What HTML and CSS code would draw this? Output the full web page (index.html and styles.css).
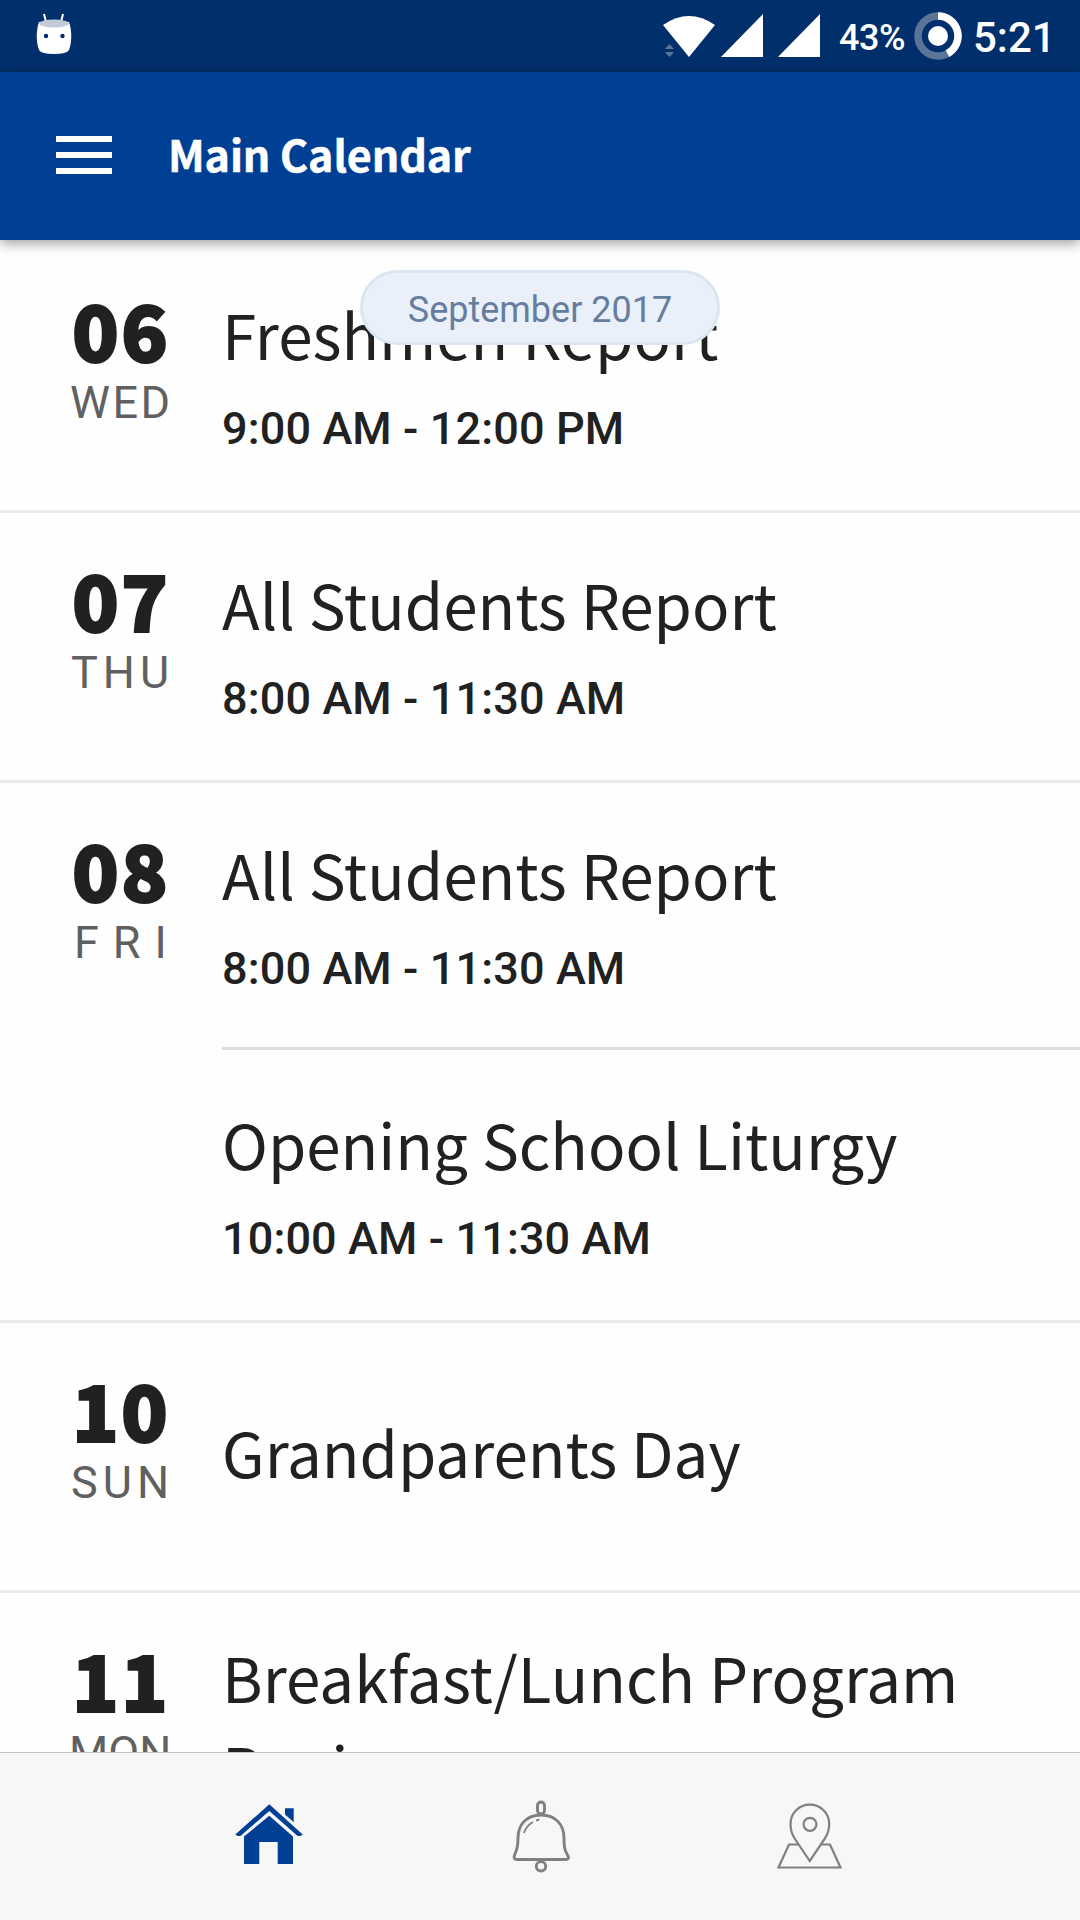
FILE: index.html
```
<!DOCTYPE html>
<html lang="en">
<head>
    <meta charset="UTF-8">
    <meta name="viewport" content="width=device-width, initial-scale=1.0">
    <title>Main Calendar</title>
    <link rel="stylesheet" href="styles.css">
</head>
<body>

    <!-- Status bar -->
    <div class="status-bar">
        <svg class="robot-icon" width="36" height="44" viewBox="0 0 36 44">
            <path d="M8 2l2 8M27 2l-2 8" stroke="#fff" stroke-width="2"/>
            <path d="M3 10C0 18 0 30 3 38Q5 42 18 42T33 38C36 30 36 18 33 10z" fill="#fff"/>
            <ellipse cx="18" cy="11.500" rx="15" ry="4" fill="#c3cbd8"/>
            <circle cx="10" cy="24" r="2.200" fill="#002f6c"/>
            <circle cx="26.500" cy="24" r="2.200" fill="#002f6c"/>
        </svg>
        <svg class="signal-icons" width="160" height="48" viewBox="0 0 160 48">
            <path d="M1 13Q27-5 53 13L27 45z" fill="#fff"/>
            <path d="M3 37l4.500-5 4.500 5zM3 40l4.500 5 4.500-5z" fill="#5b7599"/>
            <path d="M101 2v43H59zM158 2v43h-42z" fill="#fff"/>
        </svg>
        <span class="battery-text">43%</span>
        <svg class="battery-icon" width="48" height="48" viewBox="0 0 48 48">
            <circle cx="24" cy="24" r="20" fill="none" stroke="#5b7599" stroke-width="7.500"/>
            <path d="M24 4a20 20 0 0 1 9.500 37.600" fill="none" stroke="#fff" stroke-width="7.500"/>
            <circle cx="24" cy="24" r="10" fill="#fff"/>
        </svg>
        <span class="clock">5:21</span>
    </div>

    <!-- App header -->
    <header class="header">
        <div class="menu">
            <span></span>
            <span></span>
            <span></span>
        </div>
        <h1>Main Calendar</h1>
    </header>

    <!-- Event list -->
    <main class="calendar">
        <div class="month">September 2017</div>

        <section class="day">
            <div class="date">
                <div class="number">06</div>
                <div class="weekday wed">WED</div>
            </div>
            <div class="events">
                <div class="event">
                    <h2>Freshmen Report</h2>
                    <p>9:00 AM - 12:00 PM</p>
                </div>
            </div>
        </section>

        <section class="day">
            <div class="date">
                <div class="number">07</div>
                <div class="weekday thu">THU</div>
            </div>
            <div class="events">
                <div class="event">
                    <h2>All Students Report</h2>
                    <p>8:00 AM - 11:30 AM</p>
                </div>
            </div>
        </section>

        <section class="day">
            <div class="date">
                <div class="number">08</div>
                <div class="weekday fri">FRI</div>
            </div>
            <div class="events">
                <div class="event">
                    <h2>All Students Report</h2>
                    <p>8:00 AM - 11:30 AM</p>
                </div>
                <div class="event">
                    <h2>Opening School Liturgy</h2>
                    <p>10:00 AM - 11:30 AM</p>
                </div>
            </div>
        </section>

        <section class="day">
            <div class="date">
                <div class="number">10</div>
                <div class="weekday sun">SUN</div>
            </div>
            <div class="events">
                <div class="event all-day">
                    <h2>Grandparents Day</h2>
                </div>
            </div>
        </section>

        <section class="day">
            <div class="date">
                <div class="number">11</div>
                <div class="weekday mon">MON</div>
            </div>
            <div class="events">
                <div class="event two-line">
                    <h2>Breakfast/Lunch Program Begins</h2>
                </div>
            </div>
        </section>
    </main>

    <!-- Bottom navigation -->
    <nav class="bottom-nav">
        <a>
            <svg width="100" height="100" viewBox="0 0 100 100" fill="#004094">
                <path d="M65 28.300h8.700V46L65 38z"/>
                <path d="M17 54.500L49.300 27 81 54.500" fill="none" stroke="#f7f7f7" stroke-width="9"/>
                <path d="M49.300 35.700L73 56.500V84H57.700V62H39.300V84H24V56.500z"/>
                <path d="M49.300 24.300L82.700 54.500Q80 57 77 55.500L49.300 31 21 55.500Q18 57 15.300 54.500z"/>
            </svg>
        </a>
        <a>
            <svg width="100" height="100" viewBox="0 0 100 100" fill="none" stroke="#808080" stroke-width="2.900">
                <rect x="47.500" y="22" width="7" height="12" rx="3.500"/>
                <path d="M51 35C36 35 28 45 28 58C28 69 26 72 24.500 75Q23 79.500 27 79.500H76Q80 79.500 77.500 75C75 71 74 68 74 58C74 45 66 35 51 35z"/>
                <path d="M34 53C35 49 38 45 43 42M46 40.500l3.500-.8" stroke-width="1.800"/>
                <circle cx="51" cy="86.300" r="4.700"/>
            </svg>
        </a>
        <a>
            <svg width="100" height="100" viewBox="0 0 100 100" fill="none" stroke="#808080" stroke-width="2.200">
                <path d="M38 64.500H29L18.500 87.500H80.500L70 64.500H61.500"/>
                <path d="M49.700 81L35 59C31.500 54 30.500 49 30.500 44A19.300 19.300 0 0 1 69.200 44C69.200 49 68 54 64.500 59z"/>
                <circle cx="50" cy="44.300" r="6.500"/>
            </svg>
        </a>
    </nav>

</body>
</html>
```
FILE: styles.css
```
* {
    box-sizing: border-box;
}
body {
    font-family: Roboto, sans-serif;
    margin: 0;
    width: 1080px;
    height: 1920px;
    display: flex;
    flex-direction: column;
    overflow: hidden;
    background-color: #fefefe;
    color: #212121;
}
h1, h2, p {
    margin: 0;
}

/* Status bar */
.status-bar {
    flex: none;
    display: flex;
    align-items: flex-start;
    height: 72px;
    padding: 12px 28px 0 36px;
    background-color: #002f6c;
    color: #fff;
}
.robot-icon {
    margin-right: auto;
}
.signal-icons {
    margin-right: 17px;
}
.battery-text {
    width: 75px;
    font-size: 36px;
    font-weight: 500;
    line-height: 52px;
    letter-spacing: -0.5px;
}
.battery-icon {
    margin-right: 11px;
}
.clock {
    width: 79px;
    font-size: 42px;
    font-weight: 500;
    line-height: 52px;
}

/* Header */
.header {
    flex: none;
    display: flex;
    align-items: center;
    height: 168px;
    padding: 0 56px;
    background-color: #004094;
    color: #fff;
    box-shadow: 0 3px 12px rgba(0, 0, 0, 0.4);
    z-index: 2;
}
.menu {
    display: flex;
    flex-direction: column;
    gap: 10px;
    width: 56px;
    margin: -2px 56px 0 0;
}
.menu span {
    height: 6px;
    background-color: #fff;
}
h1 {
    margin-top: -7px;
    font-family: "Noto Sans CJK JP", sans-serif;
    font-size: 43px;
    font-weight: 700;
    line-height: 64px;
    letter-spacing: -0.1px;
    -webkit-text-stroke: 0.5px #fff;
}

/* Calendar */
.calendar {
    flex: 1;
    position: relative;
    padding-top: 3px;
    overflow: hidden;
}
.month {
    position: absolute;
    top: 30px;
    left: 360px;
    width: 360px;
    height: 75px;
    border: 3px solid #dce6f0;
    border-radius: 38px;
    background-color: #e9f0fa;
    color: #667d9d;
    font-size: 36px;
    line-height: 74px;
    text-align: center;
}
.day {
    display: flex;
    min-height: 270px;
    border-bottom: 3px solid #ebebeb;
}
.date {
    width: 222px;
    padding: 46px 0 0 71px;
}
.number {
    font-family: "Noto Sans CJK JP", sans-serif;
    font-size: 77px;
    font-weight: 900;
    line-height: 80px;
    letter-spacing: 2px;
    padding-left: 1px;
    -webkit-text-stroke: 2px #212121;
}
.weekday {
    margin-top: 7px;
    font-size: 45px;
    line-height: 53px;
    color: #606060;
}
.wed { margin-left: -1px; letter-spacing: 2.5px; }
.thu { letter-spacing: 5px; }
.fri { padding-left: 3px; letter-spacing: 14px; }
.sun { letter-spacing: 5px; }
.mon { margin-left: -2px; letter-spacing: 0; }
.events {
    flex: 1;
}
.event {
    height: 267px;
    padding-top: 45px;
}
.event + .event {
    height: 273px;
    border-top: 3px solid #dcdcdc;
    margin-top: -3px;
    padding-top: 48px;
}
.event.all-day {
    padding-top: 83px;
}
.event.two-line {
    padding-top: 38px;
}
h2 {
    font-family: "Noto Sans CJK JP", sans-serif;
    font-size: 61.9px;
    font-weight: 400;
    line-height: 90px;
}
.event p {
    margin-top: 24px;
    font-size: 45px;
    font-weight: 500;
    line-height: 53px;
    letter-spacing: 0.12px;
}

/* Bottom navigation */
.bottom-nav {
    flex: none;
    display: flex;
    height: 168px;
    padding: 27px 135px 0;
    border-top: 1px solid #c4c4c4;
    background-color: #f7f7f7;
}
.bottom-nav a {
    flex: 1;
    text-align: center;
}
```
